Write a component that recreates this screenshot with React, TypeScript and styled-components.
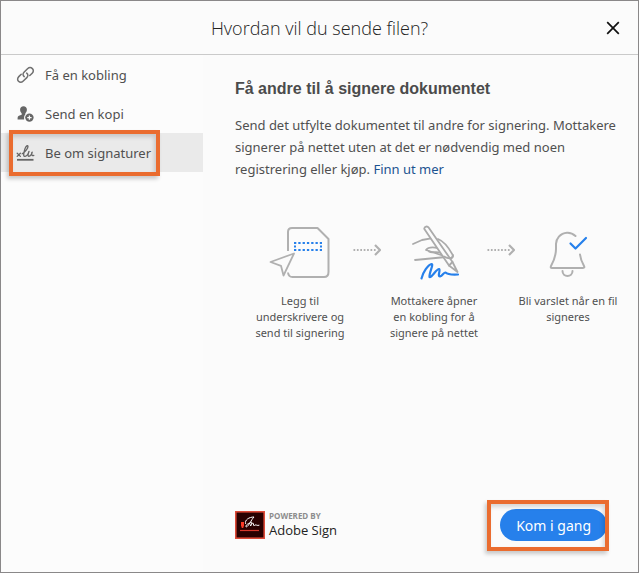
import React from "react";
import styled, { createGlobalStyle, css } from "styled-components";

const GlobalStyle = createGlobalStyle`
  *, *::before, *::after { box-sizing: border-box; }
  body {
    margin: 0;
    background: #fbfbfb;
    color: #505050;
    font-family: "Noto Sans", "Open Sans", sans-serif;
    font-size: 13px;
  }
  button { font: inherit; color: inherit; border: 0; cursor: pointer; }
`;

const Dialog = styled.div`
  display: flex;
  flex-direction: column;
  min-height: 100vh;
  border: 1px solid #8a8889;
`;

const Header = styled.header`
  display: grid;
  grid-template-columns: 48px 1fr 48px;
  align-items: center;
  height: 54px;
  border-bottom: 1px solid #cacaca;
`;

const Title = styled.h1`
  grid-column: 2;
  margin: 0;
  font-family: "Open Sans", "Noto Sans", sans-serif;
  font-size: 18px;
  line-height: 24px;
  font-weight: 300;
  color: #222;
  text-align: center;
`;

const CloseButton = styled.button`
  display: flex;
  align-items: center;
  justify-content: center;
  width: 46px;
  height: 44px;
  padding: 0;
  background: none;
  color: #111;
`;

const Body = styled.div`
  display: grid;
  grid-template-columns: 202px 1fr;
  flex: 1;
`;

const Sidebar = styled.nav`
  background: #fcfcfc;
`;

const highlight = css`
  content: "";
  position: absolute;
  border: 4px solid #ea6c2f;
  box-shadow: -2px 3px 4px rgba(0, 0, 0, 0.2), inset -2px 3px 4px rgba(0, 0, 0, 0.15);
  pointer-events: none;
`;

const NavItem = styled.button<{ $active?: boolean }>`
  position: relative;
  display: flex;
  align-items: center;
  gap: 10px;
  width: 100%;
  height: 39px;
  padding: 0 15px;
  background: ${(p) => (p.$active ? "#eaeaea" : "transparent")};
  text-align: left;

  ${(p) =>
    p.$active &&
    css`
      &::after {
        ${highlight}
        inset: -3px 43px -4px 8px;
      }
    `}
`;

const Main = styled.main`
  display: flex;
  flex-direction: column;
  padding: 24px 17px 31px 32px;
`;

const Heading = styled.h2`
  margin: 0 0 15px;
  font-family: "Liberation Sans", Arial, sans-serif;
  font-size: 16px;
  line-height: 20px;
  font-weight: 700;
  color: #4b4b4b;
`;

const Intro = styled.p`
  margin: 0;
  line-height: 22px;
`;

const Link = styled.a`
  color: #1c5390;
  text-decoration: none;
`;

const Steps = styled.div`
  display: flex;
  margin-top: 45px;
  padding-left: 12px;
`;

const Step = styled.figure`
  display: flex;
  flex: 1;
  flex-direction: column;
  align-items: center;
  margin: 0;
`;

const Caption = styled.figcaption`
  max-width: 102px;
  margin-top: 12px;
  font-size: 11px;
  line-height: 16px;
  text-align: center;
`;

const ArrowSlot = styled.div`
  display: flex;
  align-items: center;
  width: 28px;
  height: 50px;
`;

const Footer = styled.footer`
  display: flex;
  align-items: center;
  justify-content: space-between;
  margin-top: auto;
  padding-right: 14px;
`;

const Brand = styled.div`
  display: flex;
  align-items: center;
  gap: 4px;
`;

const BrandText = styled.div`
  display: flex;
  flex-direction: column;
`;

const PoweredBy = styled.span`
  color: #8d8d8d;
  font-family: "Open Sans", "Noto Sans", sans-serif;
  font-size: 8px;
  line-height: 10px;
  font-weight: 700;
`;

const Product = styled.span`
  color: #222;
  font-family: "Open Sans", "Noto Sans", sans-serif;
  font-size: 13px;
  line-height: 18px;
`;

const Callout = styled.div`
  position: relative;
  &::after {
    ${highlight}
    inset: -9px -2px -10px -13px;
  }
`;

const StartButton = styled.button`
  display: block;
  height: 32px;
  padding: 0 16px;
  border-radius: 16px;
  background: #2680eb;
  color: #fff;
  font-size: 14px;
`;

const Arrow = () => (
  <ArrowSlot aria-hidden="true">
    <svg width="28" height="14" viewBox="0 0 28 14" fill="none" stroke="#b0b0b0">
      <path d="M0.5 7H24" strokeWidth="1.8" strokeDasharray="1.7 1.7" />
      <path d="M22 2L27 7L22 12" strokeWidth="2.2" />
    </svg>
  </ArrowSlot>
);

const LinkIcon = () => (
  <svg width="19" height="18" viewBox="0 0 19 18" fill="none" stroke="#707070" strokeWidth="1.5" strokeLinecap="round" aria-hidden="true">
    <path d="M8.2 10.6C6.8 9.4 6.6 7.6 8 6.2L11.5 2.7C13 1.3 15.1 1.3 16.4 2.6C17.7 3.9 17.6 5.8 16.2 7.2L13.8 9.5" />
    <path d="M5.2 8.2L2.8 10.6C1.3 12.1 1.3 14 2.5 15.2C3.8 16.5 5.8 16.4 7.3 15L10.8 11.6C12.3 10.1 12.2 8.3 10.7 7.1" />
  </svg>
);

const PersonIcon = () => (
  <svg width="19" height="18" viewBox="0 0 19 18" aria-hidden="true">
    <path d="M7.5 1.2C9.6 1.2 10.9 2.6 10.9 4.6C10.9 6.2 10.2 7.5 9.3 8.4V9.6C8.2 10.8 7.8 12.4 8.2 14.4H1.6V12.8C1.6 10.8 3.8 10.3 5.7 9.8V8.4C4.8 7.5 4.1 6.2 4.1 4.6C4.1 2.6 5.4 1.2 7.5 1.2Z" fill="#666" />
    <circle cx="13.4" cy="12.6" r="4.2" fill="#666" />
    <path d="M13.4 10.4V14.8M11.2 12.6H15.6" stroke="#fbfbfb" strokeWidth="1.3" />
  </svg>
);

const SignIcon = () => (
  <svg width="19" height="18" viewBox="0 0 19 18" fill="none" stroke="#666" strokeWidth="1.3" strokeLinecap="round" strokeLinejoin="round" aria-hidden="true">
    <path d="M1.2 9.2L4.4 12.4M4.4 9.2L1.2 12.4" />
    <path d="M6.2 9.8C9 8 12.2 4.2 12 2.3C11.8 1 10 1.8 9 4.6C7.8 8.3 7 12.4 8.6 12.4C10.3 12.4 12.3 9.6 13 7.4C12 9.8 11.6 12.4 12.9 12.4C14.4 12.4 16 10 16.2 8.2C15.4 8.4 15.2 12.8 17.8 11.4" />
    <path d="M1 15.8H17.5" strokeWidth="1.8" strokeLinecap="butt" />
  </svg>
);

const DocumentArt = () => (
  <svg width="62" height="56" viewBox="0 0 62 56" fill="none" stroke="#b0b0b0" strokeWidth="2" strokeLinejoin="round" aria-hidden="true">
    <path d="M19 26V7Q19 3 23 3H48.5L59.5 14V47Q59.5 52 55 52H23.5Q19.5 52 19 47.5" />
    <path d="M1.5 37L25 28.5L14.5 50.5L12 40.8Z" strokeWidth="1.8" />
    <path d="M25 18H53M25 25H53M26 20.5V22.5M52 20.5V22.5" stroke="#2680eb" strokeDasharray="2.3 2" />
  </svg>
);

const HandArt = () => (
  <svg width="52" height="56" viewBox="0 0 52 56" fill="none" stroke="#aaa" strokeWidth="1.8" strokeLinecap="round" strokeLinejoin="round" aria-hidden="true">
    <path d="M5 19L14 15L23 13.4M30 14C38 17 42 25 45 30.5C45 34 41 34 36 31L27 28L18 25C20 22 25 22 30 23" />
    <path d="M21 26.5C24 28.5 28 26 31 27.5" />
    <path d="M7 35L38 32" />
    <path d="M16.2 3.8C16.4 1.2 19.4 0.8 20.6 2.6L44.5 37L49.5 47L41 40.5Z" fill="#fbfbfb" />
    <path d="M41 40.5L44.5 37M36 31.5C41 34.5 45 34 44.8 30" />
    <path d="M13.5 53.5C15 47 20 40 23.5 39C26 39 21 48 21.5 52C24 53 28 44 31 44C33 45 29 51 32 51.5C34.5 51 36 47 37.5 47.5C39 49 42 50 50 49.5" stroke="#2680eb" strokeWidth="2.2" />
  </svg>
);

const BellArt = () => (
  <svg width="42" height="56" viewBox="0 0 42 56" fill="none" stroke="#b0b0b0" strokeWidth="2" strokeLinecap="round" strokeLinejoin="round" aria-hidden="true">
    <path d="M28.5 11C25.5 8.2 23 7.5 20 7.7C13 8.2 9 14 9 19V24C9 31 7 35.5 4 41C3.5 42.3 3.7 43 5 43H36C37.5 43 37.6 42.3 37 41C35 37.5 33.5 34 33 29.5" />
    <path d="M15.5 46C15.5 52.5 25.5 52.5 25.5 46" />
    <path d="M23.5 18.5L28.5 23.5L39 13" stroke="#2680eb" strokeWidth="2.2" />
  </svg>
);

const BrandMark = () => (
  <svg width="30" height="28" viewBox="0 0 30 28" fill="none" aria-hidden="true">
    <rect x="0.8" y="0.8" width="28.4" height="26.4" fill="#290000" stroke="#dd4a38" strokeWidth="1.6" />
    <path d="M6 11H9V14.5L8.2 17H6.8L6 14.5Z" fill="#fa3b27" />
    <path d="M5 19.5H24" stroke="#d7372b" strokeWidth="1.2" />
    <path d="M10.5 12.5C9.5 9 14 6 19 6C16 9 14 15 11.5 15.8C10 16 11 13.5 14 12.5C16 11 17 10.5 16.5 12L15.5 15C17 12 18.5 11.5 18.5 13C18.3 15 19 15 20 14C21.5 13.5 22 15 24 14.3" stroke="#fff" strokeWidth="1" strokeLinecap="round" />
  </svg>
);

const navItems = [
  { label: "Få en kobling", icon: <LinkIcon />, active: false },
  { label: "Send en kopi", icon: <PersonIcon />, active: false },
  { label: "Be om signaturer", icon: <SignIcon />, active: true },
];

export default function App() {
  return (
    <>
      <GlobalStyle />
      <Dialog role="dialog" aria-labelledby="dialog-title">
        <Header>
          <Title id="dialog-title">Hvordan vil du sende filen?</Title>
          <CloseButton aria-label="Lukk">
            <svg width="14" height="14" viewBox="0 0 14 14" stroke="currentColor" strokeWidth="1.7" aria-hidden="true">
              <path d="M1.2 1.2L12.8 12.8M12.8 1.2L1.2 12.8" />
            </svg>
          </CloseButton>
        </Header>
        <Body>
          <Sidebar>
            {navItems.map((item) => (
              <NavItem key={item.label} $active={item.active} aria-current={item.active || undefined}>
                {item.icon}
                {item.label}
              </NavItem>
            ))}
          </Sidebar>
          <Main>
            <Heading>Få andre til å signere dokumentet</Heading>
            <Intro>
              Send det utfylte dokumentet til andre for signering. Mottakere signerer på nettet uten at det er
              nødvendig med noen registrering eller kjøp. <Link href="#mer">Finn ut mer</Link>
            </Intro>
            <Steps>
              <Step>
                <DocumentArt />
                <Caption>Legg til underskrivere og send til signering</Caption>
              </Step>
              <Arrow />
              <Step>
                <HandArt />
                <Caption>Mottakere åpner en kobling for å signere på nettet</Caption>
              </Step>
              <Arrow />
              <Step>
                <BellArt />
                <Caption>Bli varslet når en fil signeres</Caption>
              </Step>
            </Steps>
            <Footer>
              <Brand>
                <BrandMark />
                <BrandText>
                  <PoweredBy>POWERED BY</PoweredBy>
                  <Product>Adobe Sign</Product>
                </BrandText>
              </Brand>
              <Callout>
                <StartButton>Kom i gang</StartButton>
              </Callout>
            </Footer>
          </Main>
        </Body>
      </Dialog>
    </>
  );
}
